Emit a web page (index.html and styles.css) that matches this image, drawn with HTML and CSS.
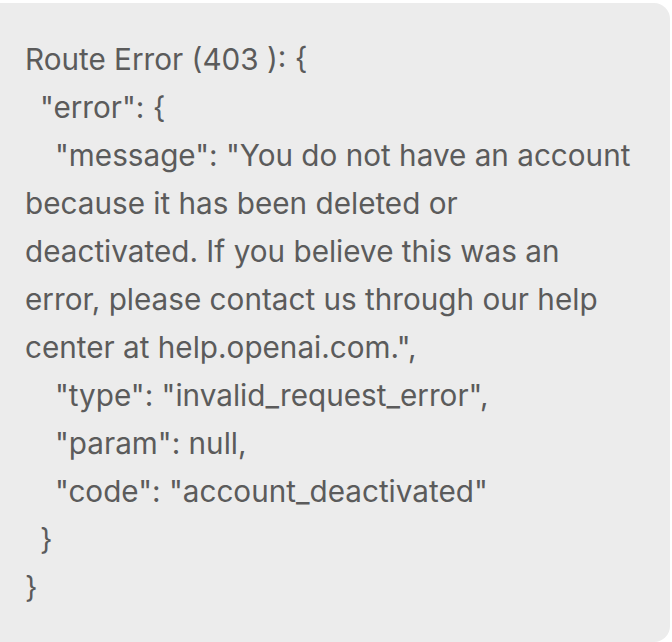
FILE: index.html
```html
<!DOCTYPE html>
<html>
<head>
<meta charset="utf-8">
<link rel="stylesheet" href="styles.css">
</head>
<body>
<div class="box">
<div class="line">Route Error (403 ): {</div>
<div class="line i1">"error": {</div>
<div class="line i2">"message": "You do not have an account</div>
<div class="line">because it has been deleted or</div>
<div class="line">deactivated. If you believe this was an</div>
<div class="line">error, please contact us through our help</div>
<div class="line">center at help.openai.com.",</div>
<div class="line i2">"type": "invalid_request_error",</div>
<div class="line i2">"param": null,</div>
<div class="line i2">"code": "account_deactivated"</div>
<div class="line i1">}</div>
<div class="line">}</div>
</div>
</body>
</html>
```
FILE: styles.css
```css
html, body {
  margin: 0;
  padding: 0;
  background: #ffffff;
}
.box {
  margin-top: 3px;
  width: 670px;
  height: 639px;
  box-sizing: border-box;
  background: #ececec;
  border-radius: 0 16px 16px 0;
  padding: 32px 0 0 25px;
  font-family: Inter, "Noto Sans", sans-serif;
  font-size: 29.7px;
  line-height: 48px;
  color: #5b5b5b;
}
.line {
  white-space: nowrap;
}
.i1 { padding-left: 15px; }
.i2 { padding-left: 30px; }
```
